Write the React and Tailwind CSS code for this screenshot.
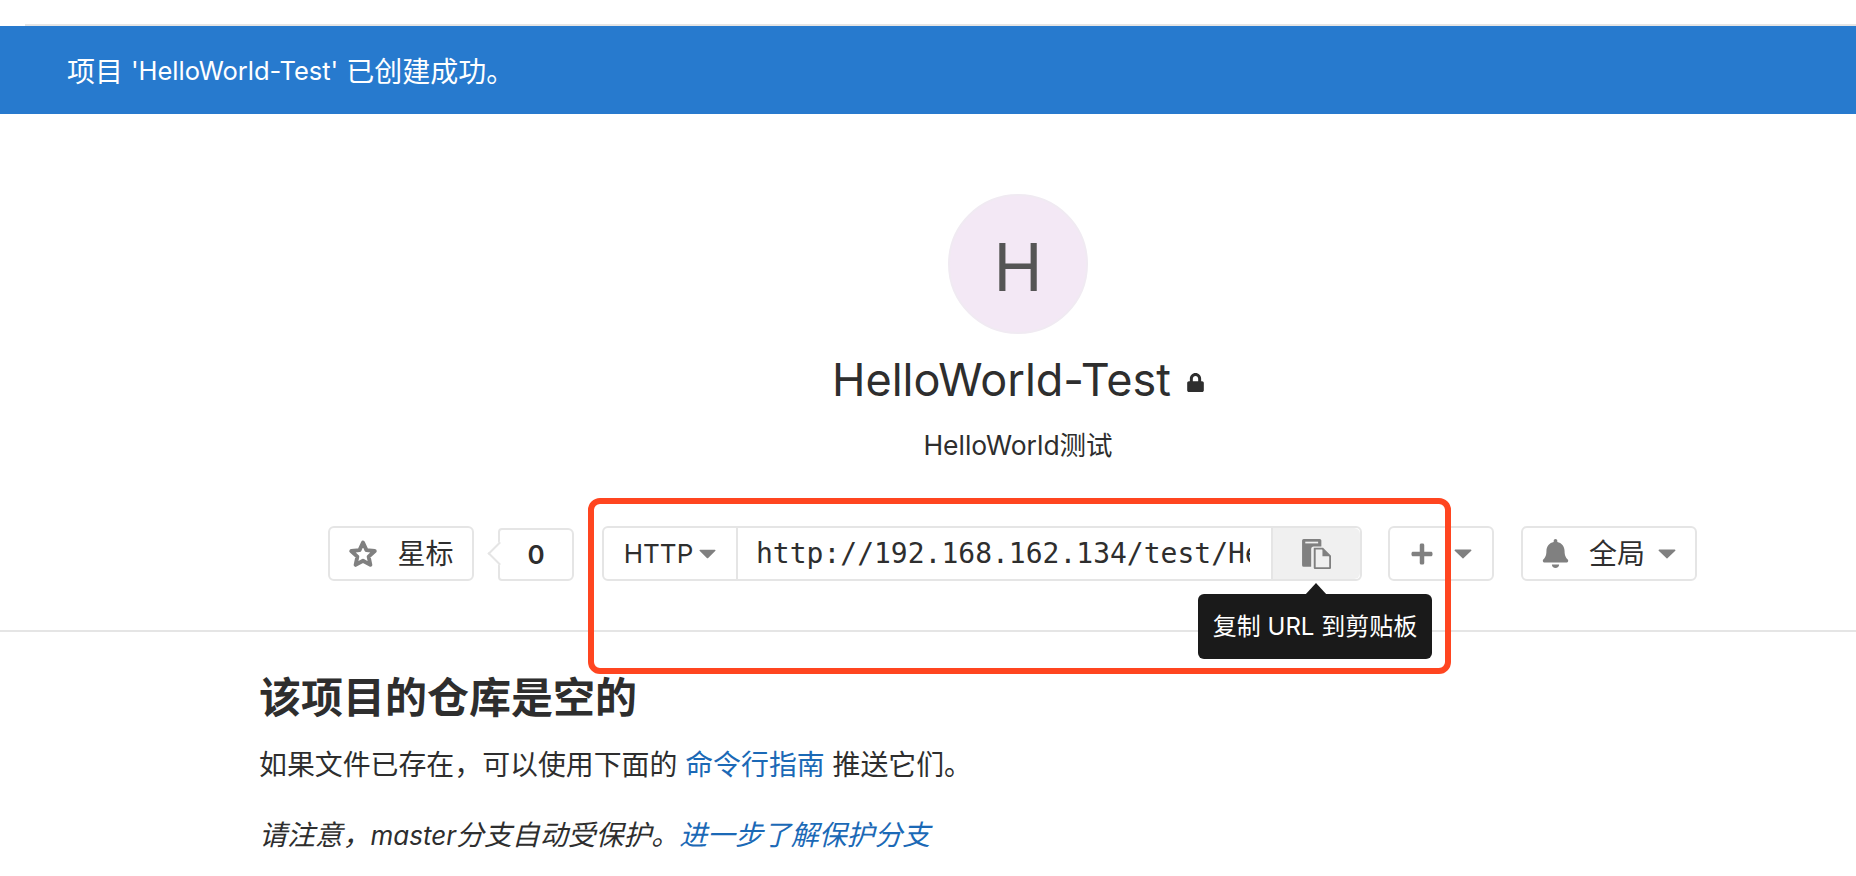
import { FaLock, FaBell, FaPlus } from "react-icons/fa";

const sans = "font-['Inter','Noto_Sans_CJK_SC',sans-serif]";

function Caret({ className }) {
  return (
    <svg viewBox="0 0 16 9" className={className} fill="#808080">
      <path d="M1 0.5h14a0.6 0.6 0 0 1 .45 1L8.4 8.4a0.6 0.6 0 0 1-.8 0L.55 1.5A.6.6 0 0 1 1 .5z" />
    </svg>
  );
}

function StarIcon() {
  return (
    <svg viewBox="0 0 26 26" className="w-[30px] h-[30px]" fill="none" stroke="#808080" strokeWidth="3.4" strokeLinejoin="round">
      <path d="M13 3l3 6.6 7.2.8-5.3 4.9 1.5 7.1L13 18.8l-6.4 3.6 1.5-7.1L2.8 10.4l7.2-.8z" />
    </svg>
  );
}

function CopyIcon() {
  return (
    <svg viewBox="0 0 28 28" className="w-[30px] h-[30px] -ml-[2px]">
      <path d="M1 1.5A1.5 1.5 0 0 1 2.5 0h15a1.5 1.5 0 0 1 1.5 1.5V7h-7a2.5 2.5 0 0 0-2.5 2.5V26H2.5A1.5 1.5 0 0 1 1 24.5z" fill="#808080" />
      <rect x="4" y="2.5" width="12" height="1.6" fill="#f0f0f0" />
      <path d="M12.8 9h7.4l7 7v10.5a.8.8 0 0 1-.8.8H13.6a.8.8 0 0 1-.8-.8z" fill="#f0f0f0" stroke="#808080" strokeWidth="1.8" />
      <path d="M20 9v7.2h7.2z" fill="#808080" />
    </svg>
  );
}

export default function App() {
  return (
    <div className={`${sans} w-full h-[876px] overflow-hidden bg-white text-[#2e2e2e]`}>
      <div className="h-[26px] ml-[25px] border-b-2 border-[#e5e5e5]" />

      {/* Flash */}
      <div className="h-[88px] bg-[#277ace] text-white text-[28px] pl-[67px] pt-[3px] flex items-center whitespace-pre">
        项目 <span className="text-[25.5px]">'HelloWorld-Test'</span> 已创建成功。
      </div>

      {/* Project header */}
      <div className="pl-[180px] flex flex-col items-center">
        <div className="mt-[80px] w-[140px] h-[140px] pt-[6px] rounded-full bg-[#f3e8f5] border-2 border-[#f0eaf2] flex items-center justify-center text-[66px] text-[#555555]">
          H
        </div>
        <div className="mt-[12px] h-[66px] flex items-center gap-[16px]">
          <h1 className="text-[45px] leading-none">HelloWorld-Test</h1>
          <FaLock className="w-[17px] h-[19px] mt-[6px] text-[#2e2e2e]" />
        </div>
        <p className="mt-[15px] text-[26.5px] leading-[36px]">HelloWorld测试</p>
      </div>

      {/* Actions */}
      <div className="relative mt-[63px] h-[55px] pl-[328px] flex text-[26px]">
        <button className="w-[146px] h-[55px] rounded-md border-2 border-[#e5e5e5] text-[28px] flex items-center justify-center gap-[19px]">
          <StarIcon />
          星标
        </button>
        <div className="relative ml-[24px] w-[76px] h-[53px] mt-[2px] rounded-r-md rounded-l-sm border-2 border-[#e5e5e5] flex items-center justify-center font-semibold">
          <span className="absolute -left-[9px] top-[15px] w-[17px] h-[17px] rotate-45 bg-white border-b-2 border-l-2 border-[#e5e5e5]" />
          <span className="relative">0</span>
        </div>

        <div className="ml-[28px] w-[760px] h-[55px] rounded-md border-2 border-[#e5e5e5] flex">
          <div className="w-[134px] border-r-2 border-[#e5e5e5] flex items-center justify-center gap-[6px]">
            HTTP
            <Caret className="w-[17px] h-[10px]" />
          </div>
          <input
            readOnly
            value="http://192.168.162.134/test/HelloWorld-Test.git"
            className="w-[533px] pl-[18px] pr-[21px] font-['DejaVu_Sans_Mono',monospace] text-[28px] text-[#2e2e2e] bg-white outline-none"
          />
          <div className="relative flex-1 bg-[#f0f0f0] border-l-2 border-[#e5e5e5] rounded-r-md flex items-center justify-center">
            <CopyIcon />
            <div className="absolute left-[-75px] top-[66px] w-[234px] h-[65px] rounded-md bg-[#1a1a1a] text-white text-[24px] flex items-center justify-center whitespace-nowrap">
              <span className="absolute -top-[11px] left-[107px] w-0 h-0 border-x-[11px] border-x-transparent border-b-[12px] border-b-[#1a1a1a]" />
              复制 URL 到剪贴板
            </div>
          </div>
        </div>

        <button className="ml-[26px] w-[106px] h-[55px] rounded-md border-2 border-[#e5e5e5] flex items-center justify-center gap-[20px]">
          <FaPlus className="w-[24px] h-[24px] text-[#808080]" />
          <Caret className="w-[18px] h-[10px]" />
        </button>
        <button className="ml-[27px] w-[176px] h-[55px] rounded-md border-2 border-[#e5e5e5] text-[28px] flex items-center justify-center">
          <FaBell className="w-[27px] h-[29px] text-[#808080]" />
          <span className="ml-[20px] mr-[13px]">全局</span>
          <Caret className="w-[18px] h-[10px]" />
        </button>

        <div className="absolute left-[588px] -top-[28px] w-[863px] h-[176px] rounded-xl border-[6px] border-[#ff4520] pointer-events-none" />
      </div>

      <div className="mt-[49px] h-[2px] bg-[#e5e5e5]" />

      {/* Empty repo */}
      <div className="pl-[259px] pt-[38px]">
        <h2 className="text-[42px] font-bold leading-[56px]">该项目的仓库是空的</h2>
        <p className="mt-[19px] text-[27.9px] leading-[40px]">
          如果文件已存在，可以使用下面的 <a className="text-[#1b69b6]">命令行指南</a> 推送它们。
        </p>
        <p className="mt-[30px] text-[27.9px] leading-[40px] italic">
          请注意，<span className="text-[26px]">master</span>分支自动受保护。<a className="text-[#1b69b6]">进一步了解保护分支</a>
        </p>
      </div>
    </div>
  );
}
